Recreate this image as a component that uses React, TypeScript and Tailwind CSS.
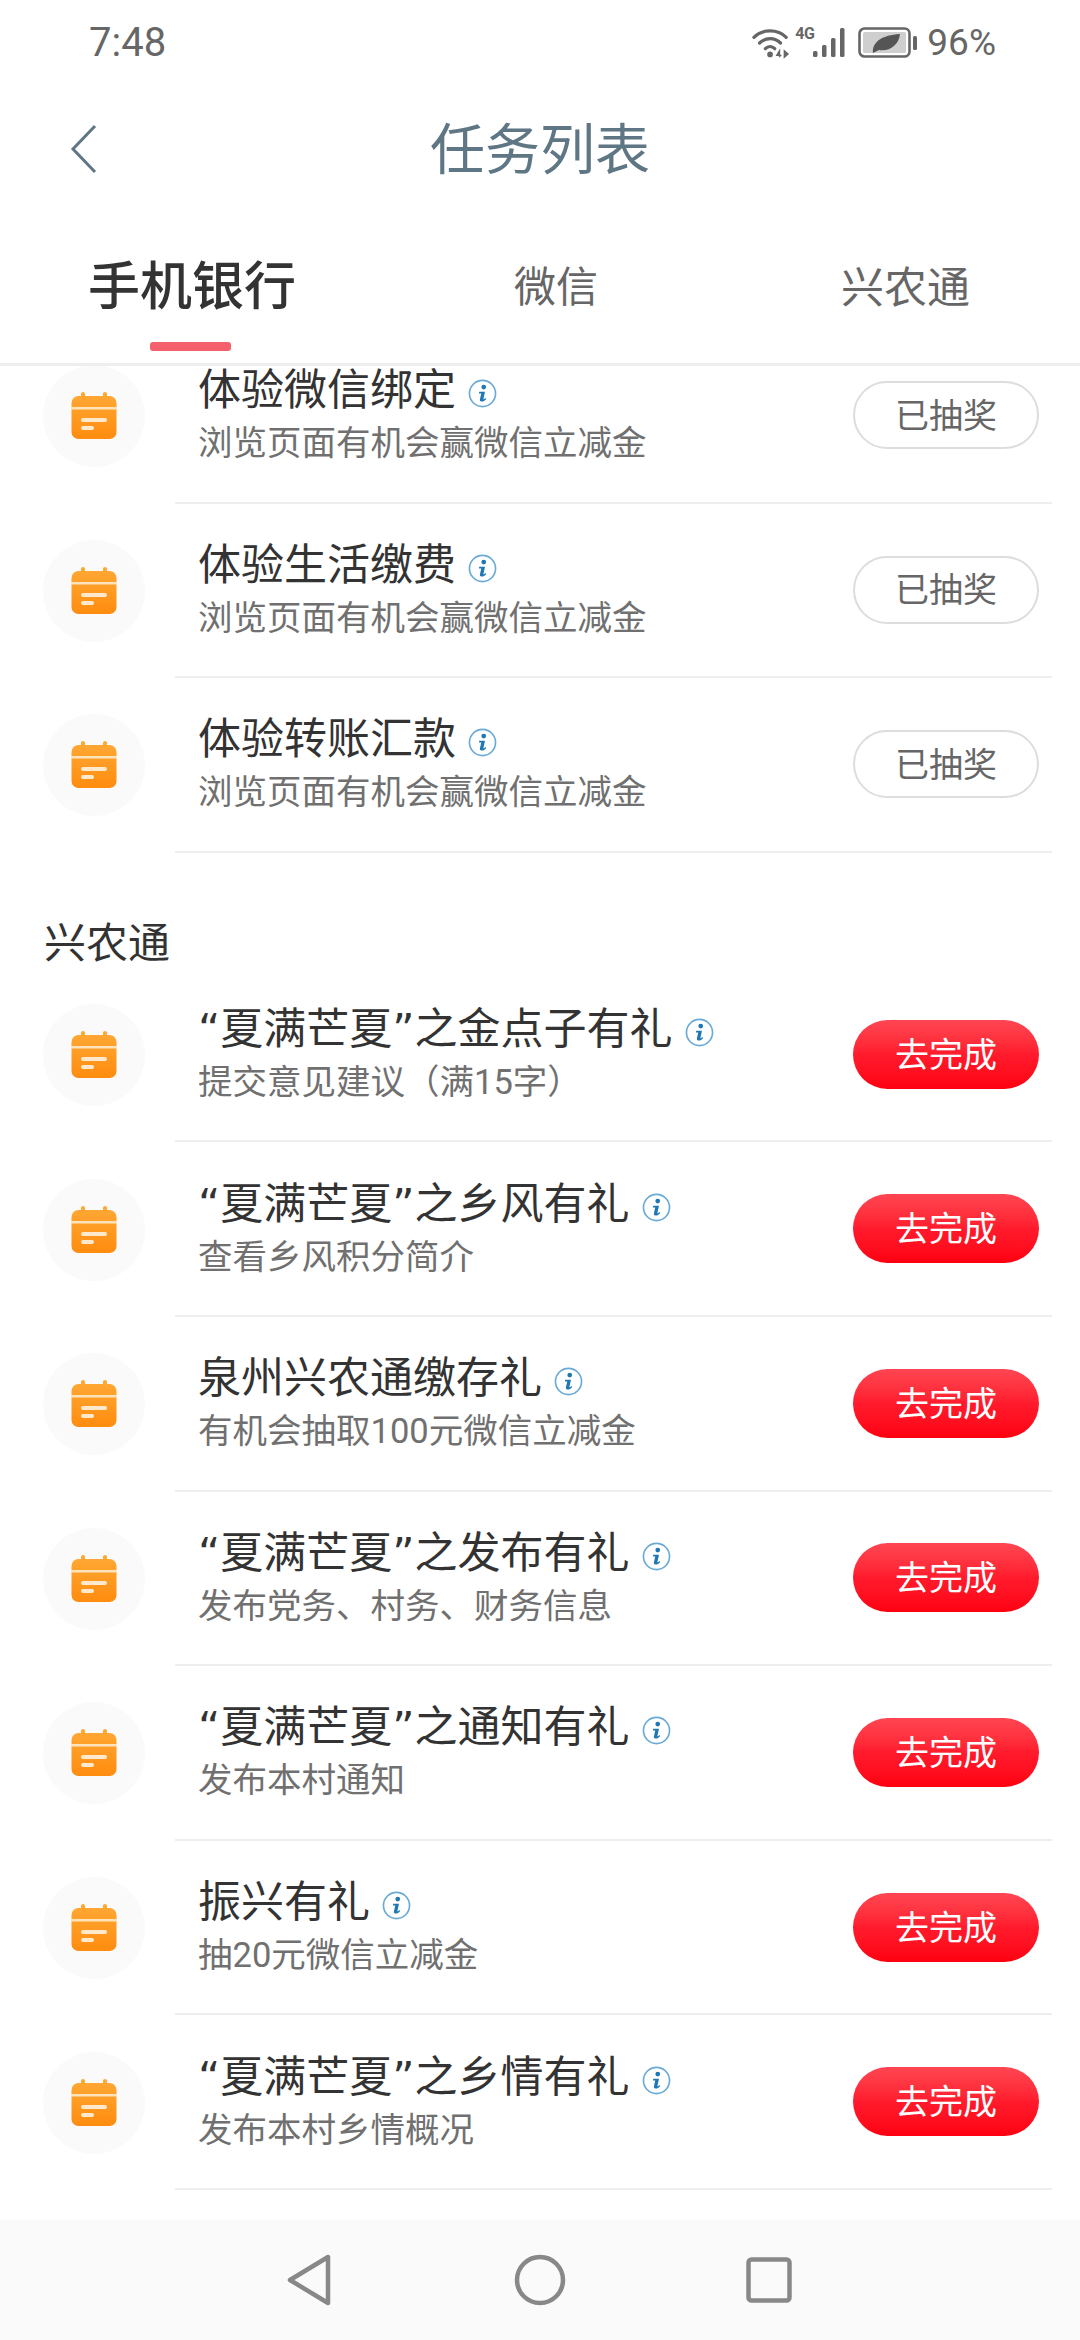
import { useId } from "react";

const sans = "font-['Roboto','Noto_Sans_CJK_SC','Noto_Sans',sans-serif]";

type Task = { title: string; desc: string; done?: boolean };

const phoneTasks: Task[] = [
  { title: "体验微信绑定", desc: "浏览页面有机会赢微信立减金", done: true },
  { title: "体验生活缴费", desc: "浏览页面有机会赢微信立减金", done: true },
  { title: "体验转账汇款", desc: "浏览页面有机会赢微信立减金", done: true },
];

const xntTasks: Task[] = [
  { title: "“夏满芒夏”之金点子有礼", desc: "提交意见建议（满15字）" },
  { title: "“夏满芒夏”之乡风有礼", desc: "查看乡风积分简介" },
  { title: "泉州兴农通缴存礼", desc: "有机会抽取100元微信立减金" },
  { title: "“夏满芒夏”之发布有礼", desc: "发布党务、村务、财务信息" },
  { title: "“夏满芒夏”之通知有礼", desc: "发布本村通知" },
  { title: "振兴有礼", desc: "抽20元微信立减金" },
  { title: "“夏满芒夏”之乡情有礼", desc: "发布本村乡情概况" },
];

function StatusIcons() {
  return (
    <div className="flex items-center">
      <svg width="38" height="32" viewBox="0 0 40 32" fill="none">
        <path d="M2 10C11 1 27 1 36 10" stroke="#666" strokeWidth="3.4" strokeLinecap="round" />
        <path d="M8 16C14 10 24 10 30 16" stroke="#666" strokeWidth="3.4" strokeLinecap="round" />
        <path d="M14 22C17 19 21 19 24 22" stroke="#666" strokeWidth="3.4" strokeLinecap="round" />
        <circle cx="19" cy="28" r="3" fill="#666" />
        <path d="M29 31V24L26 29H31M34 24V31L38 27.5Z" stroke="#666" strokeWidth="1.4" fill="#666" />
      </svg>
      <div className="relative ml-[5px] h-[32px] w-[56px]">
        <span className="absolute left-0 top-[-2px] text-[16px] font-bold leading-[18px] tracking-[-0.5px] text-[#666]">4G</span>
        <svg width="56" height="32" viewBox="0 0 56 32">
          <rect x="18" y="24" width="4.5" height="6" rx="1.5" fill="#666" />
          <rect x="27" y="18" width="4.5" height="12" rx="1.5" fill="#666" />
          <rect x="36" y="11" width="4.5" height="19" rx="1.5" fill="#666" />
          <rect x="45" y="1" width="4.5" height="29" rx="1.5" fill="#666" />
        </svg>
      </div>
      <svg width="60" height="32" viewBox="0 0 60 32" className="ml-[7px]">
        <rect x="1.5" y="1.5" width="50" height="28" rx="5" fill="none" stroke="#666" strokeWidth="2.6" />
        <rect x="5" y="5" width="43" height="21" rx="1.5" fill="#cfcfcf" />
        <rect x="55" y="9" width="4" height="14" rx="1.5" fill="#666" />
        <path d="M15 26C14 15 24 8 42 7C41 18 31 25 21 23L15 26Z" fill="#555" />
      </svg>
      <span className="ml-[9px] text-[37px] leading-none text-[#666]">96%</span>
    </div>
  );
}

function CalendarIcon() {
  const id = useId();
  return (
    <svg width="46" height="48" viewBox="0 0 46 48" fill="none">
      <defs>
        <linearGradient id={id} x1="0" y1="0" x2="0" y2="1">
          <stop offset="0" stopColor="#ffa733" />
          <stop offset="1" stopColor="#ff8c0f" />
        </linearGradient>
      </defs>
      <rect x="10" y="0" width="4" height="8" rx="2" fill="#ffa733" />
      <rect x="32" y="0" width="4" height="8" rx="2" fill="#ffa733" />
      <rect x="0.5" y="4" width="45" height="43" rx="7" fill={`url(#${id})`} />
      <rect x="0" y="15" width="46" height="2.5" fill="#ffe3bb" />
      <rect x="10" y="26" width="26" height="4" rx="2" fill="#ffe9cc" />
      <rect x="10" y="34" width="13" height="4" rx="2" fill="#ffe9cc" />
    </svg>
  );
}

function InfoIcon() {
  return (
    <svg width="29" height="29" viewBox="0 0 28 28" fill="none" className="mt-[7px] shrink-0">
      <circle cx="14" cy="14" r="12.6" stroke="#6aaad6" strokeWidth="1.6" />
      <circle cx="15.2" cy="7.8" r="2.3" fill="#1f78b4" />
      <path d="M10.8 12.2H16.4L14.8 19.6C15.6 19.6 16.4 19 17 18.4L17.6 19.2C16.4 20.8 14.8 21.8 13 21.8C11.6 21.8 11.2 21 11.6 19.4L12.8 14H10.6Z" fill="#1f78b4" />
    </svg>
  );
}

// the curly quotes are about half an em wide in the reference, wider than Roboto's
function TaskTitle({ text }: { text: string }) {
  const parts = text.split(/([“”])/);
  return (
    <span>
      {parts.map((p, i) =>
        p === "“" || p === "”" ? (
          <span key={i} className="font-['DejaVu_Sans',sans-serif]">{p}</span>
        ) : (
          <span key={i}>{p}</span>
        ),
      )}
    </span>
  );
}

function TaskRow({ task }: { task: Task }) {
  return (
    <div className="flex h-[174.6px] items-center pl-[43px] pr-7">
      <div className="flex h-[102px] w-[102px] shrink-0 items-center justify-center rounded-full bg-[#fafafa]">
        <CalendarIcon />
      </div>
      <div className="ml-[30px] flex h-full flex-1 items-center border-b-2 border-[#eeeeee] pr-[13px]">
        <div className="flex flex-1 flex-col pl-[23px] pt-[2px]">
          <div className="flex items-center gap-[12px] text-[43px] leading-[54px] text-[#333]">
            <TaskTitle text={task.title} />
            <InfoIcon />
          </div>
          <div className="text-[34.5px] leading-[52px] text-[#707070]">{task.desc}</div>
        </div>
        {task.done ? (
          <div className="flex h-[68px] w-[186px] items-center justify-center rounded-full border-2 border-[#dddddd] pt-[2px] text-[34px] text-[#666]">
            已抽奖
          </div>
        ) : (
          <div className="flex h-[69px] w-[186px] items-center justify-center rounded-full bg-gradient-to-b from-[#ff4552] via-[#ff1a2c] to-[#fe000f] pt-[2px] text-[34px] text-white">
            去完成
          </div>
        )}
      </div>
    </div>
  );
}

export default function App() {
  return (
    <div className={`flex h-[2340px] w-[1080px] flex-col overflow-hidden bg-white ${sans}`}>
      {/* status bar */}
      <div className="flex h-[86px] shrink-0 items-start justify-between pl-[89px] pr-[84px] pt-[24px]">
        <span className="text-[40px] leading-[38px] text-[#666]">7:48</span>
        <StatusIcons />
      </div>

      {/* title */}
      <div className="relative flex h-[128px] shrink-0 items-center justify-center">
        <svg width="28" height="50" viewBox="0 0 28 50" fill="none" className="absolute left-[70px] top-[38px]">
          <path d="M25 2L3 25L25 48" stroke="#5f7685" strokeWidth="3" />
        </svg>
        <span className="text-[55px] leading-none text-[#5f7685]">任务列表</span>
      </div>

      {/* tabs */}
      <div className="relative flex h-[152px] shrink-0 items-start border-b-[3px] border-[#eeeeee]">
        <div className="flex w-full items-center pt-[44px]">
          <span className="ml-[88px] text-[52px] font-medium leading-[60px] text-[#333]">手机银行</span>
          <span className="ml-[218px] text-[42px] leading-[60px] text-[#666]">微信</span>
          <span className="ml-[243px] text-[43px] leading-[60px] text-[#666]">兴农通</span>
        </div>
        <div className="absolute bottom-[12px] left-[150px] h-[9px] w-[81px] rounded-[3px] bg-[#f4606c]" />
      </div>

      {/* list, scrolled so the first row is cut by the tabs */}
      <div className="min-h-0 flex-1 overflow-hidden">
        <div className="mt-[-37px]">
          {phoneTasks.map((t) => (
            <TaskRow key={t.title} task={t} />
          ))}
          <div className="flex h-[115px] items-end pl-[44px] text-[42px] leading-[48px] text-[#333]">
            <span>兴农通</span>
          </div>
          {xntTasks.map((t) => (
            <TaskRow key={t.title} task={t} />
          ))}
        </div>
      </div>

      {/* android nav bar */}
      <div className="flex h-[120px] shrink-0 items-start bg-[#fafafa] pt-[34px]">
        <svg width="44" height="52" viewBox="0 0 44 52" fill="none" className="ml-[287px]">
          <path d="M41 3V49L3 26Z" stroke="#888" strokeWidth="4.5" strokeLinejoin="round" />
        </svg>
        <svg width="52" height="52" viewBox="0 0 52 52" fill="none" className="ml-[183px]">
          <circle cx="26" cy="26" r="23" stroke="#888" strokeWidth="4.5" />
        </svg>
        <svg width="46" height="46" viewBox="0 0 46 46" fill="none" className="ml-[180px] mt-[3px]">
          <rect x="2.5" y="2.5" width="41" height="41" rx="3" stroke="#888" strokeWidth="4.5" />
        </svg>
      </div>
    </div>
  );
}
